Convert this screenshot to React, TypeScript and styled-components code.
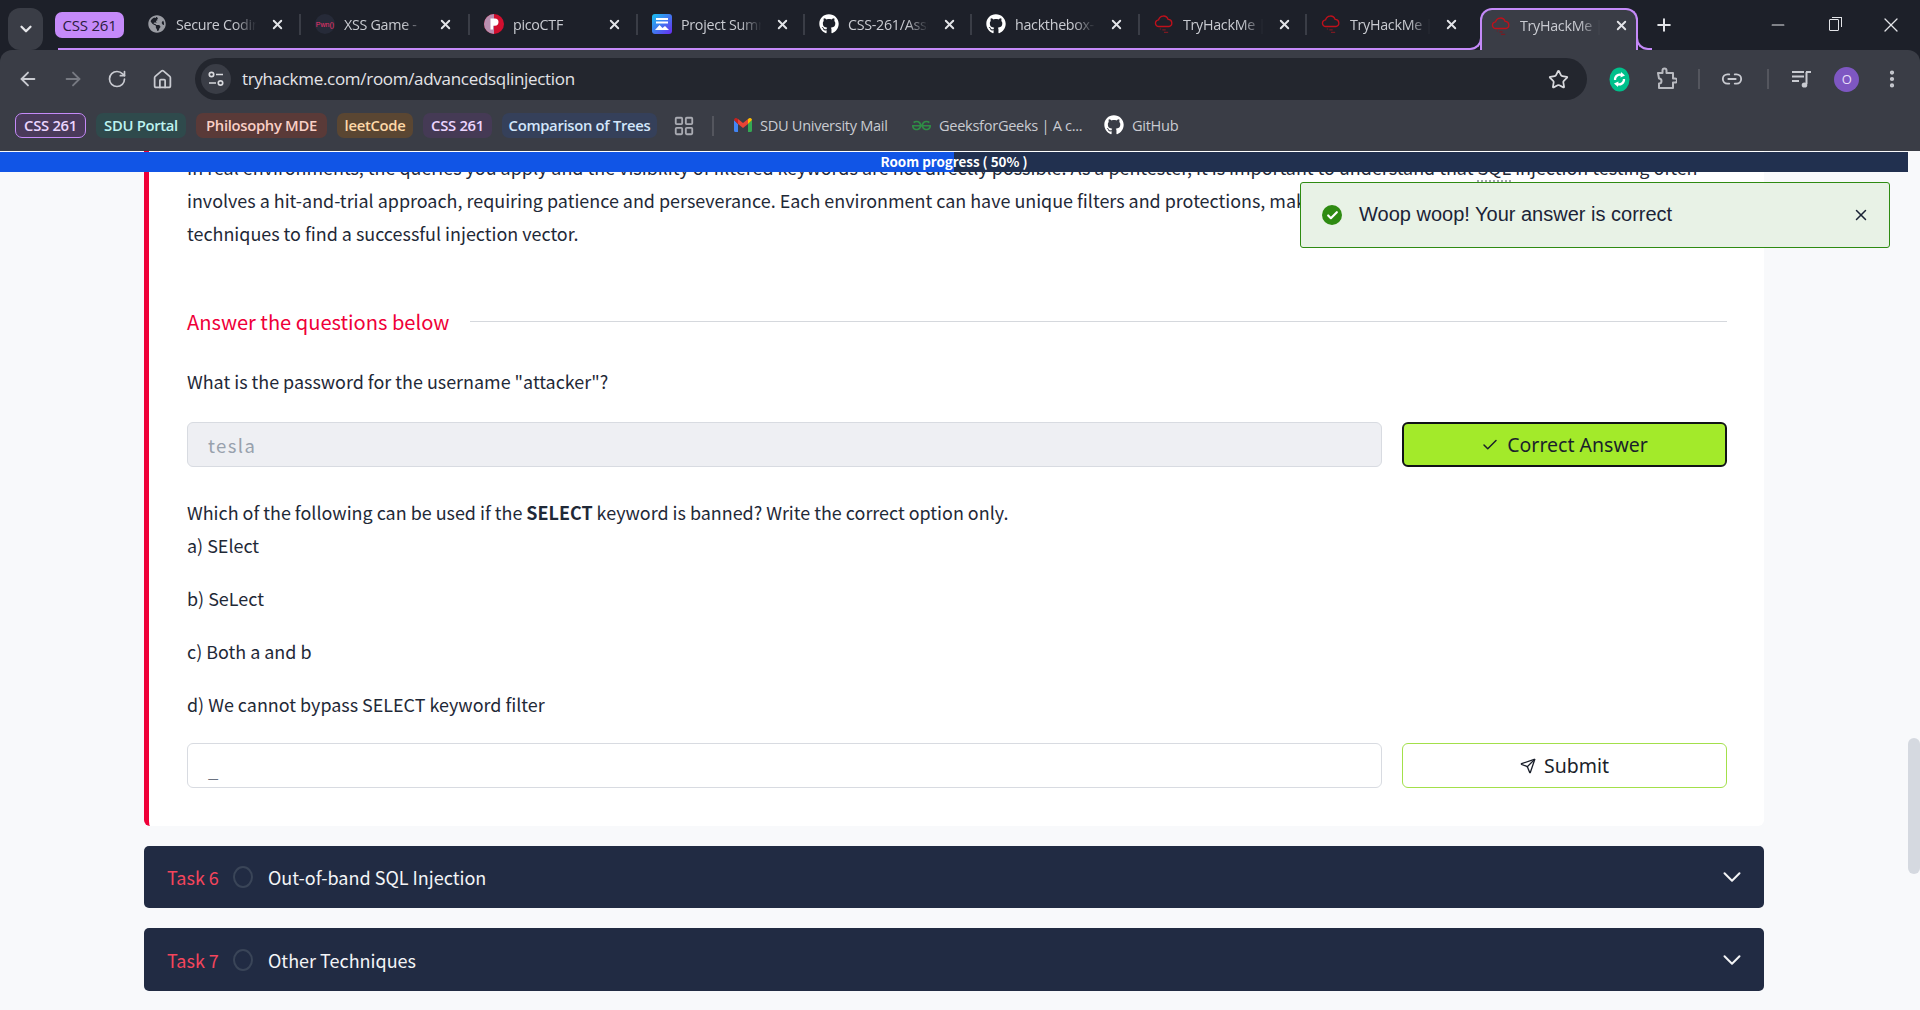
import React from "react";
import styled, { createGlobalStyle } from "styled-components";
import {
  ArrowLeft, ArrowRight, RotateCw, House, Star, Link2, EllipsisVertical,
  Minus, X, Plus, ChevronDown, Check, Send, LayoutGrid,
} from "lucide-react";
import { FaGithub, FaGlobeAmericas } from "react-icons/fa";
import { SiGeeksforgeeks } from "react-icons/si";

const CHROME = `"Open Sans", "Noto Sans", sans-serif`;
const BODY = `"Noto Sans CJK SC", "Noto Sans", sans-serif`;

const Global = createGlobalStyle`
  html, body { margin: 0; padding: 0; height: 100%; overflow: hidden; background: #f8f9fb; }
  * { box-sizing: border-box; }
`;

const Frame = styled.div`
  width: 1920px; height: 1010px; display: flex; flex-direction: column; overflow: hidden;
  background: #1d2029;
`;
const TabStrip = styled.div`
  height: 50px; display: flex; align-items: stretch; padding-left: 8px; flex: none;
  font-family: ${CHROME}; color: #c9cbd1;
`;
const TabMenu = styled.div`
  width: 35px; height: 42px; margin-top: 8px; border-radius: 12px; background: #3a3d46;
  display: flex; align-items: center; justify-content: center; color: #e6e7ea;
`;
const Group = styled.div`
  margin-left: 15px; width: 1410px; display: flex; height: 50px; border-bottom: 2px solid #c58af9;
`;
const GroupChip = styled.div`
  width: 69px; height: 26px; margin: 12px 9px 0 -3px; border-radius: 7px; background: #c58af9; color: #2a1b3d;
  font-size: 15px; display: flex; align-items: center; justify-content: center; letter-spacing: -0.2px; flex: none;
`;
const Tab = styled.div<{ $w: number }>`
  width: ${(p) => p.$w}px; flex: none; display: flex; align-items: center; height: 48px; padding-left: 14px;
  position: relative;
`;
const TabSep = styled.i`
  position: absolute; right: 0; top: 14px; width: 2px; height: 21px; background: #3a3d46;
`;
const FavSlot = styled.span`
  width: 20px; height: 20px; flex: none; display: flex; align-items: center; justify-content: center; color: #9a9ca3;
`;
const TabTitle = styled.span`
  margin-left: 9px; width: 84px; overflow: hidden; white-space: nowrap; font-size: 14.3px; letter-spacing: -0.3px;
  -webkit-mask-image: linear-gradient(90deg, #000 70%, transparent 96%);
  mask-image: linear-gradient(90deg, #000 70%, transparent 96%);
`;
const TabClose = styled.span`
  margin-left: 9px; width: 16px; display: flex; justify-content: center; color: #e3e4e8;
`;
const ActiveTab = styled.div`
  margin: 8px 0 0 12px; width: 158px; height: 42px; background: #3a3d46; position: relative;
  border: 2px solid #c58af9; border-bottom: none; border-radius: 12px 12px 0 0; display: flex; align-items: center;
  padding-left: 9px; padding-bottom: 9px; z-index: 2;
  &::before, &::after {
    content: ""; position: absolute; bottom: 0; width: 14px; height: 14px; border-bottom: 2px solid #c58af9;
  }
  &::before { left: -16px; border-right: 2px solid #c58af9; border-bottom-right-radius: 12px; }
  &::after { right: -16px; border-left: 2px solid #c58af9; border-bottom-left-radius: 12px; }
`;
const NewTab = styled.div`
  margin-left: 14px; width: 24px; display: flex; align-items: center; justify-content: center; color: #e3e4e8; padding-bottom: 1px;
`;
const WinControls = styled.div`
  margin-left: auto; display: flex; color: #e3e4e8;
`;
const WinBtn = styled.div<{ $w: number }>`
  width: ${(p) => p.$w}px; display: flex; align-items: center; justify-content: center; padding-bottom: 1px;
`;
const RestoreIcon = styled.span`
  display: block; width: 10px; height: 12px; border: 1.5px solid #e3e4e8; border-radius: 1px; position: relative;
  &::after { content: ""; position: absolute; right: -4px; top: -3px; width: 9px; height: 9px;
    border-top: 1.5px solid #e3e4e8; border-right: 1.5px solid #e3e4e8; }
`;
const Toolbar = styled.div`
  flex: none; height: 101px; background: #3a3d46; border-radius: 12px 12px 0 0; font-family: ${CHROME};
`;
const NavRow = styled.div`
  height: 60px; display: flex; align-items: flex-start; padding: 8px 17px 0 6px;
`;
const NavBtn = styled.div<{ $off?: boolean }>`
  width: 44.6px; height: 42px; display: flex; align-items: center; justify-content: center;
  color: ${(p) => (p.$off ? "#777a82" : "#c9cbd1")}; flex: none;
`;
const Address = styled.div`
  margin-left: 10.5px; width: 1392px; height: 42px; border-radius: 21px; background: #23262e; display: flex; align-items: center;
  padding: 0 18px 0 6px; flex: none;
`;
const TuneChip = styled.div`
  width: 30px; height: 30px; border-radius: 50%; background: #3a3d46; display: flex; align-items: center; justify-content: center; flex: none;
`;
const Url = styled.div`
  margin-left: 11px; font-size: 17px; color: #e3e4e8; letter-spacing: -0.3px; white-space: nowrap; flex: 1; padding-bottom: 1px;
`;
const Slot = styled.div<{ $w: number }>`
  width: ${(p) => p.$w}px; flex: none; height: 42px; display: flex; align-items: center; justify-content: center; color: #c9cbd1;
`;
const Sep = styled.i`
  width: 2px; height: 20px; background: #54565e; display: block;
`;
const Avatar = styled.div`
  width: 25px; height: 25px; border-radius: 50%; background: #7e57c2; color: #e8def8; font-size: 13px;
  display: flex; align-items: center; justify-content: center;
`;
const BookRow = styled.div`
  height: 41px; display: flex; align-items: flex-start; padding: 3px 0 0 15px;
`;
const Chip = styled.div<{ $bg: string; $fg: string; $w: number; $on?: boolean }>`
  width: ${(p) => p.$w}px; height: 25px; margin-right: 10px; border-radius: 7px; background: ${(p) => p.$bg}; color: ${(p) => p.$fg};
  font-size: 14.8px; font-weight: 600; letter-spacing: -0.3px; white-space: nowrap; padding-bottom: 1px;
  display: flex; align-items: center; justify-content: center; flex: none;
  border: ${(p) => (p.$on ? "1.5px solid #c58af9" : "none")};
`;
const Apps = styled.div`
  width: 24px; height: 25px; margin-left: 5px; color: #a9abb2; display: flex; align-items: center; justify-content: center;
`;
const BookSep = styled.i`
  width: 2px; height: 20px; background: #54565e; margin: 3px 20px 0 16px; display: block;
`;
const Book = styled.div<{ $w: number }>`
  width: ${(p) => p.$w}px; height: 25px; display: flex; align-items: center; gap: 8px; flex: none; padding-bottom: 1px;
  font-size: 14.6px; letter-spacing: -0.3px; color: #c9cbd1; white-space: nowrap;
`;
const Viewport = styled.div`
  flex: 1; display: flex; background: #f8f9fb; position: relative; min-height: 0; overflow: hidden;
`;
const Page = styled.div`
  flex: 1; position: relative; overflow: hidden; min-width: 0;
`;
const Progress = styled.div`
  position: absolute; left: 0; right: 0; top: 1px; height: 20px; z-index: 3; background: #21304f;
  display: flex; align-items: center; justify-content: center; color: #fff; padding-bottom: 3px;
  font: 700 13.4px ${BODY};
`;
const ProgressFill = styled.div`
  position: absolute; left: 0; top: 0; bottom: 0; background: #1155e6; z-index: -1;
`;
const Track = styled.div`
  width: 12px; flex: none; padding-top: 587px;
`;
const Thumb = styled.div`
  height: 136px; border-radius: 6px; background: #d5d9e0;
`;
const Column = styled.div`
  margin-left: 144px; width: 1620px; display: flex; flex-direction: column; gap: 20px;
`;
const Card = styled.section`
  height: 675px; background: #fff; border-left: 5px solid #ef0038; border-radius: 0 0 6px 6px;
  padding: 0 37px 0 38px; font-family: ${BODY}; color: #1f2937;
`;
const Para = styled.p`
  margin: 0; font-size: 17.93px; line-height: 33px; white-space: nowrap;
`;
const Abbr = styled.span`
  border-bottom: 2px dotted #a0a4ab; line-height: 1;
`;
const Heading = styled.div`
  margin-top: 55px; height: 33px; display: flex; align-items: center; gap: 21px; color: #ef0038; font-size: 20.1px; white-space: nowrap;
  &::after { content: ""; flex: 1; height: 1px; background: #d5d8dd; }
`;
const Question = styled.p<{ $top: number }>`
  margin: ${(p) => p.$top}px 0 0; font-size: 17.93px; line-height: 33px;
`;
const Options = styled.div`
  display: flex; flex-direction: column; gap: 20px; font-size: 17.93px; line-height: 33px;
`;
const Option = styled.span`
  display: block;
`;
const AnswerRow = styled.div<{ $top: number }>`
  margin-top: ${(p) => p.$top}px; display: flex; gap: 20px; height: 45px;
`;
const Field = styled.div<{ $off?: boolean }>`
  flex: 1; height: 45px; border-radius: 6px; border: 1px solid #d8dbe1; padding: 0 20px;
  background: ${(p) => (p.$off ? "#eeeff3" : "#fff")}; color: ${(p) => (p.$off ? "#98a1ad" : "#6b7280")};
  font-size: 18.5px; letter-spacing: 1.4px; display: flex; align-items: center;
`;
const Cursor = styled.span`
  padding-top: 6px;
`;
const ActionBtn = styled.div<{ $done?: boolean }>`
  width: 325px; height: 45px; flex: none; border-radius: 6px; display: flex; align-items: center; justify-content: center; gap: 8px;
  background: ${(p) => (p.$done ? "#a3ea2a" : "#fff")}; color: #1a1f2b;
  border: ${(p) => (p.$done ? "2px solid #101216" : "1px solid #a3e04a")};
  font: 400 19.5px "Noto Sans", sans-serif;
`;
const TaskBar = styled.div<{ $h: number }>`
  height: ${(p) => p.$h}px; background: #212b43; border-radius: 5px; display: flex; align-items: center;
  padding: 0 17px 0 23px; font: 18px ${BODY}; color: #f3f4f6; flex: none;
`;
const TaskNo = styled.span`
  color: #f4455c; width: 52px; white-space: nowrap;
`;
const TaskDot = styled.span`
  margin-left: 14px; width: 20px; height: 22px; border-radius: 50%; border: 2px solid #3a4558; flex: none;
`;
const TaskName = styled.span`
  margin-left: 15px; flex: 1;
`;
const Toast = styled.div`
  position: absolute; z-index: 4; left: 1300px; top: 31px; width: 590px; height: 66px; border: 1px solid #2e8b12; border-radius: 3px;
  background: #e8f2e6; display: flex; align-items: center; padding: 0 19px 0 21px;
  font: 20px "Liberation Sans", Arial, sans-serif; color: #1b2336;
`;
const ToastIcon = styled.span`
  width: 20px; height: 20px; flex: none; border-radius: 50%; background: #2e8b12; display: flex; align-items: center; justify-content: center; color: #fff;
`;
const ToastText = styled.span`
  margin-left: 17px; flex: 1; margin-top: -2px; white-space: nowrap;
`;

const Cloud = () => (
  <svg width="20" height="20" viewBox="0 0 24 24" fill="none" stroke="#c0101b" strokeWidth="1.6">
    <path d="M6 15a4 4 0 0 1-.5-8A6 6 0 0 1 17 6.5 4.3 4.3 0 0 1 18 15H6z" />
    <path d="M10 19h4M12 22h5M7 18h1" stroke="#7a1a22" />
  </svg>
);
const Pwn = () => (
  <svg width="20" height="20" viewBox="0 0 20 20">
    <circle cx="10" cy="10" r="10" fill="#262a38" />
    <text x="10" y="12.5" fontSize="7" fontFamily="Liberation Sans" textAnchor="middle" fill="#f0326e">Pwn()</text>
  </svg>
);
const Pico = () => (
  <svg width="20" height="20" viewBox="0 0 20 20">
    <circle cx="10" cy="10" r="10" fill="#d20f2f" />
    <path d="M10 0a10 10 0 0 0 0 20z" fill="#b98fb0" />
    <path d="M6.5 15.5V4.5h4.4a3.6 3.6 0 0 1 0 7.2H9v3.8z" fill="#fff" />
  </svg>
);
const Proj = () => (
  <svg width="20" height="20" viewBox="0 0 20 20">
    <defs><linearGradient id="pg" x1="0" y1="0" x2="1" y2="1"><stop offset="0" stopColor="#18c3f0" /><stop offset="1" stopColor="#6a2cf0" /></linearGradient></defs>
    <rect width="20" height="20" rx="3" fill="url(#pg)" />
    <path d="M4 4h12v2H4zM4 7.5h12v2H4z" fill="#fff" />
    <path d="M3 16l4.5-5 3 3 2.5-2 4 4z" fill="#fff" />
  </svg>
);
const Tune = () => (
  <svg width="18" height="18" viewBox="0 0 18 18" fill="none" stroke="#d8d9dd" strokeWidth="1.7">
    <circle cx="4.5" cy="4.5" r="2.2" /><path d="M9 4.5h7M2 13h7" /><circle cx="13.5" cy="13" r="2.2" />
  </svg>
);
const Refresh = () => (
  <svg width="21" height="25" viewBox="0 0 21 25">
    <ellipse cx="10.5" cy="12.5" rx="10" ry="12" fill="#00c08b" />
    <path d="M6 13a5 5 0 0 1 7-5M15 12a5 5 0 0 1-7 5" stroke="#fff" strokeWidth="2.2" fill="none" />
    <path d="M12 5l4 3.500-4.500 2zM9 20l-4-3.500 4.500-2z" fill="#fff" />
  </svg>
);
const Puzzle = () => (
  <svg width="22" height="24" viewBox="0 0 22 24" fill="none" stroke="#b8bac0" strokeWidth="2" strokeLinejoin="round">
    <path d="M3 6h4.500V3.500a2 2 0 0 1 4 0V6H18v5.500h2a2 2 0 0 1 0 4h-2V21H4v-4.500a2.500 2.500 0 0 0 0-5z" />
  </svg>
);
const Queue = () => (
  <svg width="20" height="19" viewBox="0 0 20 19" fill="none" stroke="#c9cbd1" strokeWidth="2">
    <path d="M0 2h12M0 6.500h12M0 11h7" />
    <path d="M14.500 2v12M14 2h5" />
    <ellipse cx="12.500" cy="15" rx="2.800" ry="2.600" fill="#c9cbd1" stroke="none" />
  </svg>
);
const Gmail = () => (
  <svg width="18" height="14" viewBox="0 0 18 14">
    <path d="M0 2v10.500A1.500 1.500 0 0 0 1.500 14H4V6z" fill="#4285f4" />
    <path d="M14 6v8h2.500a1.500 1.500 0 0 0 1.500-1.500V2z" fill="#34a853" />
    <path d="M0 2a2 2 0 0 1 3.200-1.600L4 1v5z" fill="#c5221f" />
    <path d="M4 1l5 4 5-4v5l-5 4-5-4z" fill="#ea4335" />
    <path d="M14 1l.8-.6A2 2 0 0 1 18 2l-4 4z" fill="#fbbc04" />
  </svg>
);

const tabs: { w: number; title: string; icon: React.ReactNode; sep: boolean }[] = [
  { w: 168, title: "Secure Coding", icon: <FaGlobeAmericas size={18} />, sep: true },
  { w: 169, title: "XSS Game - ", icon: <Pwn />, sep: true },
  { w: 168, title: "picoCTF", icon: <Pico />, sep: true },
  { w: 167, title: "Project Summary", icon: <Proj />, sep: true },
  { w: 167, title: "CSS-261/Assign", icon: <FaGithub size={20} color="#fff" />, sep: true },
  { w: 168, title: "hackthebox-lab", icon: <FaGithub size={20} color="#fff" />, sep: true },
  { w: 167, title: "TryHackMe | A", icon: <Cloud />, sep: true },
  { w: 161, title: "TryHackMe | A", icon: <Cloud />, sep: false },
];

const books = [
  { t: "CSS 261", bg: "#4a3a5b", fg: "#ecd6ff", w: 71, on: true },
  { t: "SDU Portal", bg: "#2f4a4c", fg: "#bdf3f0", w: 90 },
  { t: "Philosophy MDE", bg: "#5a3a38", fg: "#f9cfc6", w: 131 },
  { t: "leetCode", bg: "#5a4632", fg: "#fdd8a8", w: 76 },
  { t: "CSS 261", bg: "#453a55", fg: "#ecd6ff", w: 69 },
  { t: "Comparison of Trees", bg: "#35405a", fg: "#d3e6fb", w: 155 },
];

export default function App() {
  return (
    <Frame>
      <Global />
      <TabStrip>
        <TabMenu><ChevronDown size={18} strokeWidth={3} /></TabMenu>
        <Group>
          <GroupChip>CSS 261</GroupChip>
          {tabs.map((t, i) => (
            <Tab key={i} $w={t.w}>
              <FavSlot>{t.icon}</FavSlot>
              <TabTitle>{t.title}</TabTitle>
              <TabClose><X size={15} strokeWidth={3} /></TabClose>
              {t.sep && <TabSep />}
            </Tab>
          ))}
        </Group>
        <ActiveTab>
          <FavSlot><Cloud /></FavSlot>
          <TabTitle>TryHackMe | A</TabTitle>
          <TabClose><X size={15} strokeWidth={3} /></TabClose>
        </ActiveTab>
        <NewTab><Plus size={20} strokeWidth={2.4} /></NewTab>
        <WinControls>
          <WinBtn $w={56}><Minus size={20} strokeWidth={1.4} /></WinBtn>
          <WinBtn $w={56}><RestoreIcon /></WinBtn>
          <WinBtn $w={58}><X size={24} strokeWidth={1.3} /></WinBtn>
        </WinControls>
      </TabStrip>
      <Toolbar>
        <NavRow>
          <NavBtn><ArrowLeft size={22} /></NavBtn>
          <NavBtn $off><ArrowRight size={22} /></NavBtn>
          <NavBtn><RotateCw size={20} /></NavBtn>
          <NavBtn><House size={21} /></NavBtn>
          <Address>
            <TuneChip><Tune /></TuneChip>
            <Url>tryhackme.com/room/advancedsqlinjection</Url>
            <Star size={21} color="#d8d9dd" strokeWidth={2} />
          </Address>
          <Slot $w={66}><Refresh /></Slot>
          <Slot $w={26}><Puzzle /></Slot>
          <Slot $w={40}><Sep /></Slot>
          <Slot $w={26}><Link2 size={22} /></Slot>
          <Slot $w={46}><Sep /></Slot>
          <Slot $w={22}><Queue /></Slot>
          <Slot $w={68}><Avatar>O</Avatar></Slot>
          <Slot $w={22}><EllipsisVertical size={22} strokeWidth={2.6} /></Slot>
        </NavRow>
        <BookRow>
          {books.map((b, i) => (
            <Chip key={i} $bg={b.bg} $fg={b.fg} $w={b.w} $on={b.on}>{b.t}</Chip>
          ))}
          <Apps><LayoutGrid size={22} /></Apps>
          <BookSep />
          <Book $w={178}><Gmail />SDU University Mail</Book>
          <Book $w={192}><SiGeeksforgeeks size={19} color="#2f8d46" />GeeksforGeeks | A c...</Book>
          <Book $w={80}><FaGithub size={20} color="#fff" />GitHub</Book>
        </BookRow>
      </Toolbar>
      <Viewport>
        <Page>
          <Progress>
            <ProgressFill style={{ width: "50%" }} />
            Room progress ( 50% )
          </Progress>
          <Column>
            <Card>
              <Para>
                In real environments, the queries you apply and the visibility of filtered keywords are not directly possible. As a pentester, it is important to understand that <Abbr>SQL</Abbr> injection testing often
                <br />
                involves a hit-and-trial approach, requiring patience and perseverance. Each environment can have unique filters and protections, making it necessary to try different
                <br />
                techniques to find a successful injection vector.
              </Para>
              <Heading>Answer the questions below</Heading>
              <Question $top={27}>What is the password for the username "attacker"?</Question>
              <AnswerRow $top={24}>
                <Field $off>tesla</Field>
                <ActionBtn $done><Check size={18} />Correct Answer</ActionBtn>
              </AnswerRow>
              <Question $top={29}>Which of the following can be used if the <b>SELECT</b> keyword is banned? Write the correct option only.</Question>
              <Options>
                <Option>a) SElect</Option>
                <Option>b) SeLect</Option>
                <Option>c) Both a and b</Option>
                <Option>d) We cannot bypass SELECT keyword filter</Option>
              </Options>
              <AnswerRow $top={22}>
                <Field><Cursor>_</Cursor></Field>
                <ActionBtn><Send size={16} />Submit</ActionBtn>
              </AnswerRow>
            </Card>
            <TaskBar $h={62}>
              <TaskNo>Task 6</TaskNo><TaskDot /><TaskName>Out-of-band SQL Injection</TaskName>
              <ChevronDown size={30} strokeWidth={1.6} color="#f3f4f6" />
            </TaskBar>
            <TaskBar $h={63}>
              <TaskNo>Task 7</TaskNo><TaskDot /><TaskName>Other Techniques</TaskName>
              <ChevronDown size={30} strokeWidth={1.6} color="#f3f4f6" />
            </TaskBar>
          </Column>
        </Page>
        <Track><Thumb /></Track>
        <Toast>
          <ToastIcon><Check size={13} strokeWidth={4} /></ToastIcon>
          <ToastText>Woop woop! Your answer is correct</ToastText>
          <X size={18} color="#1b2336" />
        </Toast>
      </Viewport>
    </Frame>
  );
}
